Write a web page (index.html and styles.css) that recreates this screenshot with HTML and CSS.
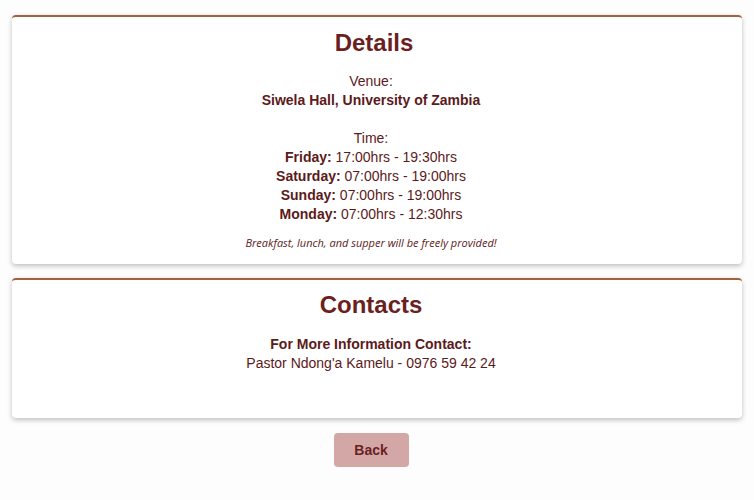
FILE: index.html
```html
<!DOCTYPE html>
<html>
<head>
<meta charset="utf-8">
<link rel="stylesheet" href="styles.css">
</head>
<body>
<main class="page">
  <section class="card card-details">
    <h2 class="card-title">Details</h2>
    <p class="line">Venue:</p>
    <p class="line"><strong>Siwela Hall, University of Zambia</strong></p>
    <p class="line blank">&nbsp;</p>
    <p class="line">Time:</p>
    <p class="line"><strong>Friday:</strong> 17:00hrs - 19:30hrs</p>
    <p class="line"><strong>Saturday:</strong> 07:00hrs - 19:00hrs</p>
    <p class="line"><strong>Sunday:</strong> 07:00hrs - 19:00hrs</p>
    <p class="line"><strong>Monday:</strong> 07:00hrs - 12:30hrs</p>
    <p class="note">Breakfast, lunch, and supper will be freely provided!</p>
  </section>
  <section class="card card-contacts">
    <h2 class="card-title">Contacts</h2>
    <p class="line"><strong>For More Information Contact:</strong></p>
    <p class="line">Pastor Ndong'a Kamelu - 0976 59 42 24</p>
  </section>
  <div class="actions">
    <button class="back-btn">Back</button>
  </div>
</main>
</body>
</html>
```

FILE: styles.css
```css
html, body {
  margin: 0;
  padding: 0;
  background: #fdfdfd;
}
body {
  font-family: "Liberation Sans", Arial, sans-serif;
  font-size: 14px;
  color: #5c1a1a;
}
.page {
  display: flex;
  flex-direction: column;
  gap: 14px;
  padding: 15px 12px 20px;
}
.card {
  background: #fff;
  border-top: 2px solid #a3623d;
  border-radius: 4px;
  box-shadow: 0 2px 5px rgba(0,0,0,0.25);
  text-align: center;
  padding: 11px 28px 14px 16px;
}
.card-title {
  margin: 0 0 14px;
  font-size: 24px;
  font-weight: bold;
  color: #6b1f1f;
  line-height: 30px;
}
.card-details .card-title {
  margin-left: 6px;
}
.line {
  margin: 0;
  line-height: 19px;
}
.line strong {
  font-weight: bold;
}
.note {
  margin: 11px 0 0;
  font-family: "Open Sans", sans-serif;
  font-style: italic;
  font-size: 11px;
  line-height: 15px;
}
.card-contacts {
  padding-top: 10px;
  padding-bottom: 45px;
}
.card-contacts .card-title {
  margin-bottom: 15px;
}
.actions {
  display: flex;
  justify-content: center;
  padding-right: 12px;
  margin-top: 1px;
}
.back-btn {
  width: 75px;
  height: 34px;
  border: none;
  border-radius: 4px;
  background: #d4a7a7;
  color: #6b1f1f;
  font-family: "Liberation Sans", Arial, sans-serif;
  font-size: 14px;
  font-weight: bold;
}
```
